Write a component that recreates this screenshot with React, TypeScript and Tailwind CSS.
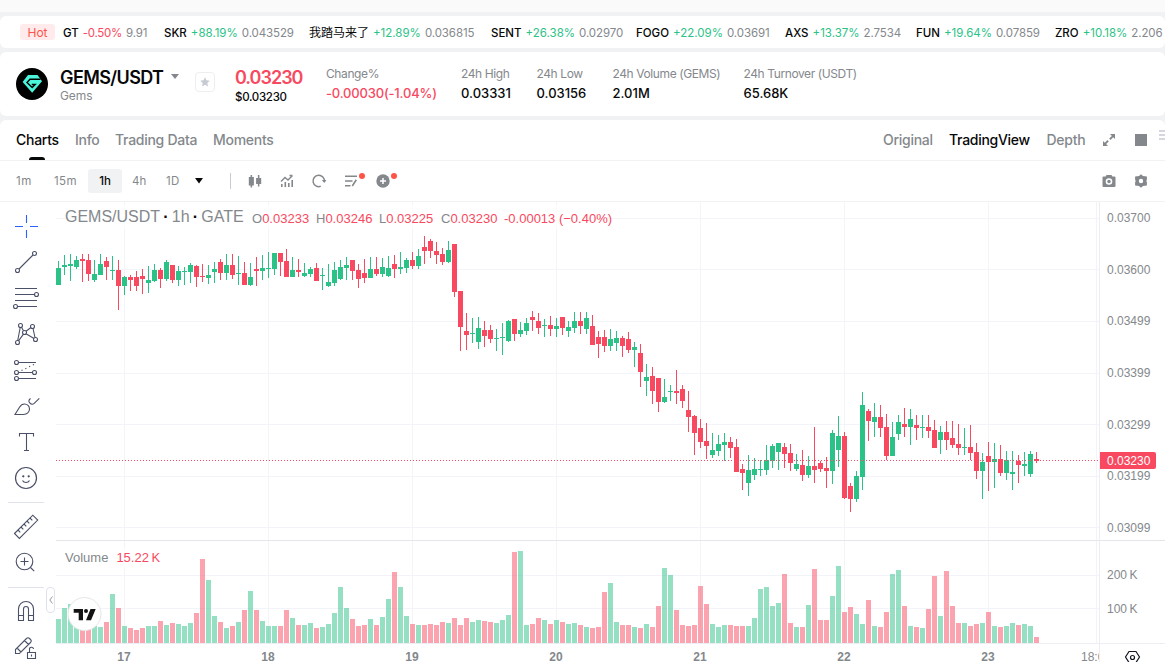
import { FC, ReactNode } from 'react';
import clsx from 'clsx';

type Ticker = {
  name: string;
  change: string;
  price: string;
  width: string;
};

const tickers: Ticker[] = [
  { name: 'GT', change: '-0.50%', price: '9.91', width: 'w-[101px]' },
  { name: 'SKR', change: '+88.19%', price: '0.043529', width: 'w-[145px]' },
  { name: '我踏马来了', change: '+12.89%', price: '0.036815', width: 'w-[182px]' },
  { name: 'SENT', change: '+26.38%', price: '0.02970', width: 'w-[145px]' },
  { name: 'FOGO', change: '+22.09%', price: '0.03691', width: 'w-[149px]' },
  { name: 'AXS', change: '+13.37%', price: '2.7534', width: 'w-[131px]' },
  { name: 'FUN', change: '+19.64%', price: '0.07859', width: 'w-[139px]' },
  { name: 'ZRO', change: '+10.18%', price: '2.206', width: 'w-[110px]' },
];

const stats = [
  { label: 'Change%', value: '-0.00030(-1.04%)', width: 'w-[135px]', down: true },
  { label: '24h High', value: '0.03331', width: 'w-[75.5px]' },
  { label: '24h Low', value: '0.03156', width: 'w-[76px]' },
  { label: '24h Volume (GEMS)', value: '2.01M', width: 'w-[131px]' },
  { label: '24h Turnover (USDT)', value: '65.68K', width: 'w-[140px]' },
];

// [up, high, bodyTop, bodyBottom, low, volumeTop]
type Candle = [number, number, number, number, number, number];

const candles: Candle[] = [
  [1, 261, 268, 285, 285, 619], [1, 255, 265, 267, 275, 608], [1, 254, 264, 266, 281, 604], [1, 256, 260, 267, 269, 612],
  [0, 254, 259, 261, 282, 620], [0, 254, 260, 274, 281, 622], [1, 260, 274, 280, 282, 626], [1, 254, 264, 275, 275, 627],
  [0, 257, 261, 267, 280, 622], [1, 256, 270, 271, 280, 594], [0, 260, 270, 286, 310, 608], [1, 276, 277, 286, 295, 626],
  [0, 275, 277, 280, 291, 628], [0, 271, 277, 286, 291, 630], [0, 269, 276, 279, 294, 628], [1, 266, 280, 283, 293, 626],
  [1, 264, 270, 281, 282, 626], [0, 268, 270, 279, 288, 621], [1, 260, 262, 279, 281, 625], [0, 265, 265, 280, 283, 623],
  [1, 266, 271, 280, 286, 624], [1, 267, 271, 272, 285, 626], [1, 263, 265, 272, 283, 623], [0, 265, 266, 277, 287, 613],
  [0, 264, 276, 277, 282, 559], [1, 265, 275, 278, 284, 580], [1, 262, 269, 272, 283, 616], [0, 259, 262, 273, 280, 622],
  [1, 254, 265, 273, 280, 628], [0, 254, 265, 275, 279, 626], [1, 256, 273, 274, 285, 622], [0, 262, 273, 285, 285, 610],
  [1, 263, 277, 285, 286, 591], [0, 257, 269, 271, 286, 610], [1, 255, 268, 271, 280, 621], [1, 252, 268, 269, 278, 626],
  [1, 253, 253, 269, 275, 626], [0, 253, 253, 262, 276, 626], [0, 249, 261, 277, 277, 610], [1, 257, 270, 277, 277, 618],
  [0, 259, 270, 272, 277, 625], [1, 263, 273, 276, 277, 625], [1, 267, 269, 274, 277, 623], [0, 263, 268, 281, 281, 628],
  [1, 268, 275, 276, 290, 627], [1, 264, 282, 286, 287, 624], [1, 262, 270, 283, 286, 613], [1, 260, 267, 279, 280, 587],
  [1, 257, 265, 268, 280, 608], [0, 260, 260, 271, 280, 619], [0, 264, 270, 279, 288, 626], [0, 259, 273, 278, 283, 625],
  [1, 257, 269, 278, 278, 619], [0, 257, 269, 274, 276, 625], [1, 258, 267, 274, 277, 617], [1, 256, 268, 276, 277, 599],
  [0, 255, 264, 269, 278, 572], [1, 252, 267, 269, 274, 587], [1, 258, 260, 268, 273, 616], [0, 252, 260, 266, 269, 624],
  [1, 249, 256, 266, 269, 625], [0, 236, 247, 251, 264, 625], [0, 239, 241, 251, 258, 624], [0, 242, 251, 255, 264, 625],
  [0, 248, 254, 262, 265, 622], [1, 241, 250, 262, 263, 623], [0, 244, 244, 292, 297, 618], [0, 291, 291, 327, 351, 625],
  [0, 313, 331, 335, 350, 618], [1, 318, 333, 334, 343, 622], [1, 317, 328, 342, 349, 620], [0, 321, 330, 336, 347, 621],
  [0, 325, 330, 339, 343, 622], [1, 329, 338, 339, 351, 623], [1, 323, 337, 338, 355, 620], [1, 320, 321, 341, 342, 615],
  [0, 319, 319, 334, 341, 552], [1, 322, 330, 334, 337, 551], [1, 318, 323, 331, 335, 625], [0, 311, 317, 320, 331, 624],
  [0, 313, 321, 328, 334, 618], [1, 319, 325, 326, 337, 620], [0, 316, 325, 329, 336, 624], [1, 318, 326, 329, 337, 620],
  [0, 317, 317, 328, 335, 622], [1, 321, 327, 331, 337, 624], [1, 312, 321, 328, 333, 623], [0, 312, 321, 326, 334, 625],
  [1, 312, 318, 329, 334, 627], [0, 315, 326, 345, 345, 628], [0, 331, 337, 344, 358, 627], [0, 330, 337, 346, 352, 592],
  [1, 329, 339, 346, 351, 583], [1, 331, 338, 343, 351, 622], [0, 336, 338, 346, 357, 625], [0, 332, 339, 350, 353, 625],
  [1, 342, 347, 350, 367, 627], [0, 344, 353, 372, 387, 628], [1, 364, 377, 381, 396, 624], [0, 367, 376, 391, 404, 627],
  [0, 378, 378, 402, 412, 606], [1, 379, 397, 402, 403, 568], [1, 385, 391, 392, 401, 575], [0, 370, 391, 393, 404, 610],
  [0, 385, 389, 401, 408, 625], [0, 391, 410, 417, 432, 626], [0, 415, 416, 433, 455, 625], [0, 419, 428, 442, 448, 586],
  [0, 423, 441, 446, 459, 604], [1, 433, 450, 455, 458, 624], [1, 435, 444, 451, 456, 627], [1, 433, 442, 445, 461, 625],
  [0, 437, 442, 448, 458, 625], [0, 439, 447, 472, 472, 626], [0, 464, 469, 473, 490, 626], [1, 455, 470, 483, 496, 626],
  [1, 458, 469, 475, 480, 618], [1, 460, 469, 470, 476, 589], [1, 445, 460, 470, 475, 587], [1, 444, 446, 461, 468, 606],
  [1, 443, 443, 452, 470, 603], [0, 443, 447, 454, 468, 574], [0, 444, 453, 463, 471, 623], [1, 454, 464, 469, 471, 627],
  [0, 450, 465, 475, 481, 627], [1, 456, 466, 475, 478, 605], [0, 427, 466, 470, 483, 569], [0, 461, 463, 469, 472, 620],
  [0, 457, 468, 471, 488, 620], [1, 430, 433, 471, 484, 596], [1, 416, 436, 450, 467, 566], [0, 432, 436, 498, 499, 612],
  [0, 483, 486, 499, 512, 607], [1, 471, 476, 499, 502, 614], [1, 392, 405, 477, 490, 624], [0, 409, 411, 421, 441, 600],
  [1, 403, 417, 422, 437, 626], [0, 405, 417, 428, 437, 627], [0, 414, 427, 456, 460, 612], [1, 422, 437, 456, 456, 574],
  [1, 415, 422, 434, 440, 570], [0, 408, 424, 427, 437, 606], [1, 409, 419, 427, 445, 626], [0, 415, 425, 428, 440, 627],
  [1, 415, 427, 428, 438, 628], [0, 415, 427, 431, 438, 609], [0, 420, 430, 448, 448, 576], [1, 426, 432, 440, 454, 616],
  [0, 421, 432, 440, 450, 571], [0, 421, 438, 445, 448, 606], [0, 424, 444, 448, 455, 623], [1, 428, 447, 448, 455, 623],
  [0, 425, 447, 453, 460, 626], [0, 443, 452, 471, 479, 624], [1, 453, 462, 471, 499, 623], [0, 442, 456, 462, 491, 612],
  [1, 443, 459, 462, 488, 626], [0, 445, 459, 473, 476, 627], [1, 451, 460, 473, 480, 626], [1, 451, 472, 474, 490, 623],
  [0, 455, 461, 465, 483, 625], [1, 452, 464, 466, 476, 624], [1, 451, 454, 474, 477, 626], [0, 452, 459, 461, 463, 637],
];

// [label, gridline y, text baseline]
const priceLabels: [string, number, number][] = [
  ['0.03700', 218, 222], ['0.03600', 269, 274], ['0.03499', 321, 325], ['0.03399', 373, 377],
  ['0.03299', 424, 429], ['0.03199', 476, 480], ['0.03099', 527, 532],
  ['200\u2009K', 575, 579], ['100\u2009K', 608, 613],
];

const days: [string, number][] = [
  ['17', 124], ['18', 268], ['19', 412], ['20', 556], ['21', 700], ['22', 844], ['23', 988],
];

const UP = '#2bc287';
const DOWN = '#f84960';

const Tool: FC<{ children: ReactNode; color?: string }> = ({ children, color = '#4a5068' }) => (
  <div className="flex h-9 w-[52px] items-center justify-center">
    <svg width="28" height="28" viewBox="0 0 28 28" fill="none" stroke={color} strokeWidth="1.1">
      {children}
    </svg>
  </div>
);

const ToolIcon: FC<{ children: ReactNode; className?: string }> = ({ children, className }) => (
  <svg className={clsx('shrink-0', className)} width="16" height="16" viewBox="0 0 16 16" fill="#84888c">
    {children}
  </svg>
);

const TickerBar = () => (
  <div className="flex h-8 items-center overflow-hidden rounded-md bg-white pl-5 text-[11.5px]">
    <span className="mr-2 flex h-4 w-[35px] shrink-0 items-center justify-center rounded-[3px] bg-[#ffebeb] pt-px text-xs text-[#ff5349]">
      Hot
    </span>
    {tickers.map((item) => (
      <div key={item.name} className={clsx('flex h-4 shrink-0 items-center gap-1 whitespace-nowrap pt-px leading-4', item.width)}>
        <span className={clsx('text-[#070808]', item.name.startsWith('我') ? 'text-xs' : 'font-medium')}>{item.name}</span>
        {item.change.startsWith('-')
          ? <span className="tracking-[-0.3px] text-[#f84960]">{item.change}</span>
          : <span className="text-[#2bc287]">{item.change}</span>}
        <span className="tracking-[-0.1px] text-[#84888c]">{item.price}</span>
      </div>
    ))}
  </div>
);

const PairHeader = () => (
  <div className="flex h-16 rounded-md bg-white pl-4">
    <svg className="mt-4 shrink-0" width="32" height="32" viewBox="0 0 32 32">
      <circle cx="16" cy="16" r="16" fill="#000" />
      <path d="M12 7h9.5l4.500 6.200L16.200 24.700 6.600 14z" fill="#4bf5dc" />
      <path d="M24.500 11.300H14l-3 3.200 5.200 5 3-3h-3.400" fill="none" stroke="#000" strokeWidth="1.4" />
    </svg>
    <div className="ml-3 w-[123px] shrink-0">
      <div className="mt-[15px] flex h-[21px] items-center text-[18px] font-semibold leading-[22px] text-[#070808]">
        <span className="w-[103px] whitespace-nowrap tracking-[-0.6px]">GEMS/USDT</span>
        <svg className="mb-[3px] ml-2 shrink-0" width="8" height="5" viewBox="0 0 8 5"><path d="M0 0h8L4 5z" fill="#84888c" /></svg>
      </div>
      <div className="text-xs leading-4 tracking-[-0.1px] text-[#84888c]">Gems</div>
    </div>
    <div className="ml-3 mt-5 flex size-5 shrink-0 items-center justify-center rounded border border-[#eceef0]">
      <svg width="10" height="10" viewBox="0 0 10 10">
        <path d="M5 .2l1.400 3.100 3.400.4-2.500 2.300.7 3.400L5 7.700 2 9.400l.7-3.400L.2 3.700l3.400-.4z" fill="#c6cad2" />
      </svg>
    </div>
    <div className="ml-5 w-[91px] shrink-0">
      <div className="mt-[15px] text-[18px] font-semibold leading-[21px] tracking-[-1px] text-[#f84960]">0.03230</div>
      <div className="text-[11.5px] font-medium leading-[18px] tracking-[-0.3px] text-[#070808]">$0.03230</div>
    </div>
    {stats.map((stat) => (
      <div key={stat.label} className={clsx('shrink-0 whitespace-nowrap pt-[14px]', stat.width)}>
        <div className="text-xs leading-4 tracking-[-0.4px] text-[#84888c]">{stat.label}</div>
        <div
          className={clsx(
            'mt-[3px] text-[13px] font-medium leading-4',
            stat.down ? 'tracking-[-0.18px] text-[#f84960]' : 'text-[#070808]',
          )}
        >
          {stat.value}
        </div>
      </div>
    ))}
  </div>
);

const Tabs = () => (
  <div className="relative flex h-[41px] items-center border-b border-[#f1f2f4] pl-4 text-sm font-medium tracking-[-0.28px] text-[#84888c]">
    <div className="relative flex h-full w-[59px] items-center text-[#070808]">
      Charts
      <span className="absolute bottom-0 left-[13px] h-[3px] w-4 rounded-t-sm bg-[#070808]" />
    </div>
    <span className="w-10">Info</span>
    <span className="w-[98px] whitespace-nowrap">Trading Data</span>
    <span>Moments</span>
    <span className="ml-auto w-[66px]">Original</span>
    <span className="w-[97.5px] text-[#070808]">TradingView</span>
    <span className="w-[54.5px]">Depth</span>
    <ToolIcon>
      <path d="M9 2h5v5l-1.800-1.800-2.700 2.700-1.300-1.300 2.700-2.700zM7 14H2V9l1.800 1.800 2.700-2.700 1.300 1.300-2.700 2.700z" />
    </ToolIcon>
    <ToolIcon className="ml-4"><path d="M2 2h12v12H2z" /></ToolIcon>
    <svg className="mb-[10px] ml-[10px]" width="6" height="10" viewBox="0 0 6 10" stroke="#c6cad2" strokeWidth="1.4">
      <path d="M0 1h6M0 5h6M0 9h6" />
    </svg>
  </div>
);

const IntervalBar = () => (
  <div className="flex h-[41px] items-center border-b border-[#f1f2f4] pl-4 text-[11.5px] text-[#84888c]">
    <span className="w-[38px] pt-px tracking-[0.6px]">1m</span>
    <span className="w-[34px] pt-px tracking-[0.4px]">15m</span>
    <span className="flex h-6 w-[34px] items-center justify-center rounded-[3px] bg-[#f1f2f4] pt-px font-medium text-[#070808]">1h</span>
    <span className="ml-[10px] w-[34px] pt-px">4h</span>
    <span className="w-[29px] pt-px tracking-[0.4px]">1D</span>
    <svg width="8" height="6" viewBox="0 0 8 6"><path d="M0 0h8L4 5.600z" fill="#070808" /></svg>
    <span className="ml-[27px] h-4 w-px bg-[#c6cad2]" />
    <ToolIcon className="ml-4">
      <path d="M1.800 4h1.800V2h1.500v2h1.800v8.500H5.100V14.500H3.600v-2H1.800zM9.100 5h1.800V2h1.500v3h1.800v6h-1.800v2.500h-1.500V11H9.100z" />
    </ToolIcon>
    <ToolIcon className="ml-4">
      <path d="M2 11h1.600v3H2zM5.500 9h1.600v5H5.500zM9 10h1.600v4H9zM12.400 7H14v7h-1.600z" />
      <path d="M2 8.500L6 4.500l3 2.500 4.500-4.500M10.500 2.500h3" fill="none" stroke="#84888c" strokeWidth="1.4" />
    </ToolIcon>
    <ToolIcon className="ml-4">
      <path d="M9.700 13.300A5.700 5.700 0 1 1 13.400 8.500" fill="none" stroke="#84888c" strokeWidth="1.5" />
      <path d="M10.800 7h4.600L13.300 10z" />
    </ToolIcon>
    <div className="relative ml-4 flex">
      <ToolIcon>
        <path d="M2 3.300h12M2 8h7.500M2 12.700h5.500M9.300 13l4-6.300" fill="none" stroke="#84888c" strokeWidth="1.6" />
      </ToolIcon>
      <span className="absolute -right-1.5 top-0 size-1.5 rounded-full bg-[#ff5349]" />
    </div>
    <div className="relative ml-4 flex">
      <ToolIcon>
        <circle cx="8" cy="8" r="6.700" />
        <path d="M8 5v6M5 8h6" stroke="#fff" strokeWidth="1.5" />
      </ToolIcon>
      <span className="absolute -right-1.5 top-0 size-1.5 rounded-full bg-[#ff5349]" />
    </div>
    <ToolIcon className="ml-auto">
      <path fillRule="evenodd" d="M5.500 2h5l.8 1.500h2.200q1 0 1 1v8.500q0 1-1 1h-11q-1 0-1-1V4.500q0-1 1-1h2.200zM8 5.200a3.300 3.300 0 1 0 0 6.600 3.300 3.300 0 0 0 0-6.600zM8 6.700a1.800 1.800 0 1 1 0 3.600 1.800 1.800 0 0 1 0-3.600z" />
    </ToolIcon>
    <ToolIcon className="ml-4 mr-4">
      <path fillRule="evenodd" d="M8 1.300l2 1.700 3.900.6v3.200L13.300 8l.6 1.200v3.200L10 13l-2 1.700L6 13l-3.900-.6V9.200L2.700 8l-.6-1.200V3.600L6 3zM8 5.800a2.200 2.200 0 1 0 0 4.400 2.200 2.200 0 0 0 0-4.400z" />
    </ToolIcon>
  </div>
);

const DrawingTools = () => (
  <div className="relative w-14 shrink-0 pt-[6px]">
    <Tool color="#2962ff">
      <path d="M14.500 3v8M14.500 18v8M3 14.500h8M18 14.500h8" />
    </Tool>
    <Tool>
      <circle cx="5.500" cy="22.500" r="2" />
      <circle cx="22.500" cy="5.500" r="2" />
      <path d="M7 21L21 7" />
    </Tool>
    <Tool>
      <path d="M3 4.500h22M3 10.500h19.500M3 16.500h22M5.500 22.500H25" />
      <circle cx="24.500" cy="10.500" r="2" />
      <circle cx="3.500" cy="22.500" r="2" />
    </Tool>
    <Tool>
      <path d="M5.700 20.500L8.200 7.500M9.500 7.200l2 3.600M14 11.300l5-3.800M21 8.500l2 9M14 13.800l8 4.700M11.500 14.200l-5 6.600" />
      <circle cx="8.500" cy="5.500" r="2" />
      <circle cx="20.500" cy="6.500" r="2" />
      <circle cx="12.500" cy="12.500" r="2" />
      <circle cx="5.500" cy="22.500" r="2" />
      <circle cx="23.500" cy="19.500" r="2" />
    </Tool>
    <Tool>
      <path d="M6.500 6.500H24M6.500 16.500h14M6.500 22.500H24" />
      <path d="M9.500 14.500L23 8" strokeDasharray="1.2 3" />
      <circle cx="4.500" cy="6.500" r="2" />
      <circle cx="4.500" cy="16.500" r="2" />
      <circle cx="22.500" cy="16.500" r="2" />
      <circle cx="4.500" cy="22.500" r="2" />
    </Tool>
    <Tool>
      <path d="M3 22.500h8.500c3.500 0 6-2.500 6-5.500s-2.200-5-5-5c-2.300 0-3.800 1.200-5 3.200zM18.500 6.500c-2 1.500-2 3.200-.8 4.400 1.300 1.400 3.200 1.600 4.500.4L27.300 6.300" />
    </Tool>
    <Tool>
      <path d="M7.500 8.500v-3h14v3M14.500 5.500v17M12 22.500h5" />
    </Tool>
    <Tool>
      <circle cx="14" cy="14" r="10.500" strokeWidth="1.2" />
      <path d="M10.500 16.500c.8 1.500 2 2 3.500 2s2.700-.5 3.500-2" />
      <circle cx="11.300" cy="12.300" r=".6" fill="#4a5068" />
      <circle cx="16.700" cy="12.300" r=".6" fill="#4a5068" />
    </Tool>
    <div className="mb-[5px] ml-2 mt-[6px] h-px w-9 bg-[#e0e3eb]" />
    <Tool>
      <path d="M2.500 21.500L20.800 3.200l4.900 4.900L7.400 26.400zM6 18l2.300 2.300M9 15l2.300 2.300M12 12l2.300 2.300M15 9l2.300 2.300M18 6l2.300 2.300" />
    </Tool>
    <Tool>
      <circle cx="12.500" cy="13.500" r="8.300" />
      <path d="M12.500 9.500v8M8.500 13.500h8M18.500 19.500l3.700 3.700" />
    </Tool>
    <div className="mb-[5px] ml-2 mt-[7px] h-px w-9 bg-[#e0e3eb]" />
    <Tool>
      <path d="M6.500 23.500V12a7.500 7.500 0 0 1 15 0v11.500h-5V12a2.500 2.500 0 0 0-5 0v11.500zM6.500 18.500h5M16.500 18.500h5" />
    </Tool>
    <Tool>
      <path d="M3.500 20.500v-4L14.500 5.500q1.500-1.500 3 0l1 1q1.500 1.500 0 3L7.500 20.500zM12.500 7.500l4 4M5.500 15.500l3.500 3.500" />
      <path d="M15.500 19.500h8v6h-8zM17.500 19.500v-3a2 2 0 0 1 4-.5M19.500 21.500v2" />
    </Tool>
    <div className="absolute left-[46px] top-[385px] flex h-[26px] w-[9px] items-center justify-center rounded-[4px] border border-[#e0e3eb] bg-white">
      <svg width="4" height="8" viewBox="0 0 4 8" fill="none" stroke="#9598a1"><path d="M3.500.5L.8 4l2.700 3.500" /></svg>
    </div>
  </div>
);

const Chart = () => (
  <div className="relative h-[460px] flex-1">
    <svg
      width="1109"
      height="460"
      viewBox="56 202 1109 460"
      fontFamily="'Liberation Sans', Arial, sans-serif"
      fontSize="12"
      fill="#84888c"
    >
      <g fill="#f3f3fa" shapeRendering="crispEdges">
        {priceLabels.map(([label, y]) => <rect key={label} x="56" y={y} width="1043" height="1" />)}
        {days.map(([label, x]) => <rect key={label} x={x} y="202" width="1" height="441" />)}
        <rect x="1096" y="202" width="1" height="441" />
        <rect x="56" y="540" width="1109" height="1" fill="#e5e6e9" />
        <rect x="56" y="643" width="1109" height="1" fill="#ededf5" />
        <rect x="1099" y="202" width="1" height="460" fill="#ededf5" />
      </g>
      <g shapeRendering="crispEdges">
        {candles.map(([up, high, top, bottom, low, volume], i) => {
          const x = 58 + i * 6;
          return (
            <g key={x} fill={up ? UP : DOWN}>
              <rect x={x} y={high} width="1" height={low - high} />
              <rect x={x - 2} y={top} width="5" height={bottom - top} />
              <rect x={x - 2} y={volume} width="5" height={643 - volume} opacity="0.5" />
            </g>
          );
        })}
      </g>
      <path d="M56 460.500H1099" stroke={DOWN} strokeDasharray="1 2" shapeRendering="crispEdges" />
      {priceLabels.map(([label, , baseline]) => <text key={label} x="1107" y={baseline}>{label}</text>)}
      <path d="M1100 452h54q2 0 2 2v13q0 2-2 2h-54z" fill={DOWN} />
      <text x="1107" y="465" fill="#fff">0.03230</text>
      {days.map(([label, x]) => (
        <text key={label} x={x} y="661" textAnchor="middle" fontWeight="bold">{label}</text>
      ))}
      {/* The last time label runs under the price axis */}
      <svg x="1070" y="644" width="29" height="18">
        <text x="11" y="17">18:00</text>
      </svg>
      <path d="M1129 651.500h7l3.500 5.500-3.500 5.500h-7l-3.500-5.500z" fill="none" stroke="#131722" strokeWidth="1.2" />
      <circle cx="1132.500" cy="657.500" r="2" fill="none" stroke="#131722" strokeWidth="1.2" />
      <circle cx="84.500" cy="614" r="16.500" fill="#fff" stroke="#e5e6e9" />
      <path d="M73.700 609h9.300v11.300h-4.300v-7.500h-5zM90.500 609h5.200l-4.700 11.300H86z" fill="#131313" />
      <circle cx="86" cy="611" r="2" fill="#131313" />
    </svg>
    <div className="absolute left-[9px] top-[3px] flex items-baseline whitespace-nowrap bg-white/70 font-['Liberation_Sans',Arial,sans-serif] text-[#84888c]">
      <span className="w-[187px] text-base">
        GEMS/USDT<b className="mx-[3.200px] text-[#070808]">·</b>1h<b className="mx-[3.200px] text-[#070808]">·</b>GATE
      </span>
      <span className="relative top-px flex text-[13px]">
        <span className="w-16">O<span className="text-[#f84960]">0.03233</span></span>
        <span className="w-[63px]">H<span className="text-[#f84960]">0.03246</span></span>
        <span className="w-[62px]">L<span className="text-[#f84960]">0.03225</span></span>
        <span className="w-[63px]">C<span className="text-[#f84960]">0.03230</span></span>
        <span className="text-[#f84960]">-0.00013 (−0.40%)</span>
      </span>
    </div>
    <div className="absolute left-[9px] top-[346px] flex gap-2 bg-white/70 font-['Liberation_Sans',Arial,sans-serif] text-[13px] text-[#84888c]">
      <span>Volume</span>
      <span className="text-[#f84960]">15.22{'\u2009'}K</span>
    </div>
  </div>
);

const App = () => (
  <div className="flex h-[662px] w-[1165px] flex-col overflow-hidden bg-[#f1f2f4] font-['Inter','Noto_Sans_CJK_SC',sans-serif]">
    <div className="h-3 shrink-0 bg-[#fafafa]" />
    <div className="flex flex-col gap-1 pt-1">
      <TickerBar />
      <PairHeader />
      <div className="rounded-t-md bg-white">
        <Tabs />
        <IntervalBar />
        <div className="flex">
          <DrawingTools />
          <Chart />
        </div>
      </div>
    </div>
  </div>
);

export default App;
